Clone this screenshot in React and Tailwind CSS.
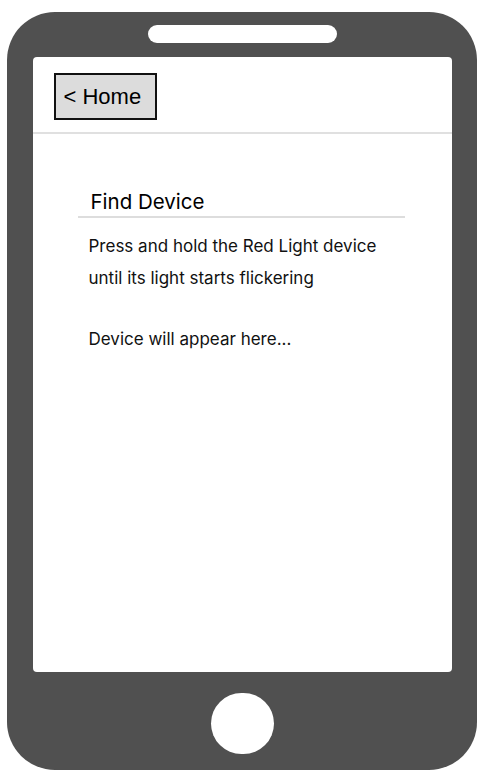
import React from "react";

export default function App() {
  return (
    <div className="w-[484px] h-[778px] bg-white pt-[12px] pl-[7px]" style={{ fontFamily: "Inter, 'Noto Sans', sans-serif" }}>
      <div className="w-[470px] h-[758px] bg-[#505050] rounded-[48px] flex flex-col items-center">
        <div className="mt-[13px] w-[189px] h-[18px] rounded-full bg-white" />
        <div className="mt-[14px] w-[419px] h-[615px] bg-white rounded-[4px] flex flex-col">
          <div className="h-[77px] pl-[21px] pt-[16px] border-b-2 border-[#e0e0e0]">
            <div
              className="w-[103px] h-[47px] bg-[#dcdcdc] border-2 border-[#111] flex items-center pl-[8px] text-[22px] text-black"
              style={{ fontFamily: "'Liberation Sans', Arial, sans-serif" }}
            >
              &lt; Home
            </div>
          </div>
          <div className="pl-[45px] pt-[54px] w-[372px]">
            <div className="border-b-2 border-[#dddddd] pl-[13px] text-[20.5px] leading-[28px] text-black">
              Find Device
            </div>
            <div className="pl-[11px] pt-[12px] text-[17px] leading-[32px] text-[#111]">
              <p>Press and hold the Red Light device</p>
              <p>until its light starts flickering</p>
              <p className="mt-[29px]">Device will appear here...</p>
            </div>
          </div>
        </div>
        <div className="mt-[21px] w-[63px] h-[61px] rounded-full bg-white" />
      </div>
    </div>
  );
}
